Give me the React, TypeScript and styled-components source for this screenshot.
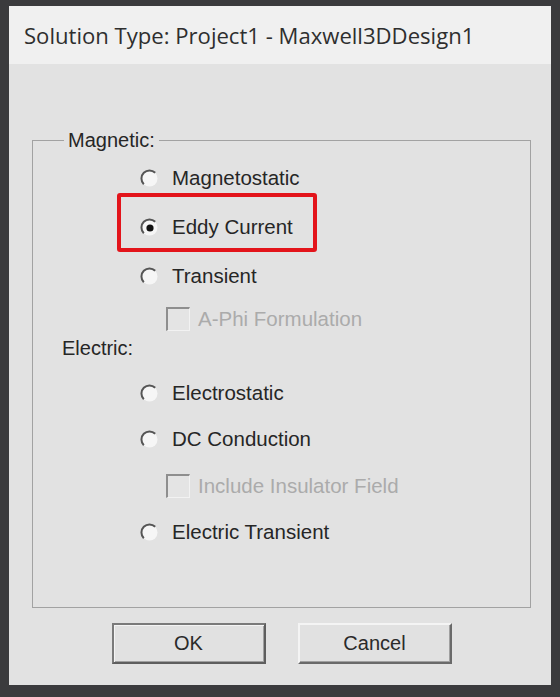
import React from 'react';
import styled, { createGlobalStyle } from 'styled-components';

const GlobalStyle = createGlobalStyle`
  html, body { margin: 0; padding: 0; background: #3b3b3d; }
  #root { width: 560px; height: 697px; }
`

const Backdrop = styled.div`
  width: 560px; height: 697px;
  box-sizing: border-box;
  padding: 6px 9px 12px 9px;
  background: #3b3b3d;
  display: flex;
`

const Dialog = styled.div`
  flex: 1;
  display: flex; flex-direction: column;
  background: #e2e2e2;
  font-family: "Liberation Sans", Arial, sans-serif;
  color: #262626;
`

const TitleBar = styled.div`
  height: 58px;
  flex-shrink: 0;
  display: flex; align-items: center;
  padding-left: 15px;
  background: #f0f0f0;
  font-family: "Open Sans", "Noto Sans", sans-serif;
  font-size: 22.1px;
  color: #2e2e2e;
`

const Body = styled.div`
  flex: 1;
  display: flex; flex-direction: column;
  padding: 65px 20px 22px 23px;
`

const Group = styled.fieldset`
  margin: 0;
  padding: 15px 0 63px 0;
  border: 1px solid #a2a2a2;
  display: flex; flex-direction: column;
  min-width: 0;
`

const Legend = styled.legend`
  margin-left: 31px;
  padding: 0 4px;
  font-size: 20px;
  line-height: 22px;
  color: #262626;
`

const SectionLabel = styled.div<{ $mt?: number }>`
  margin-top: ${p => p.$mt || 0}px;
  padding-left: 29px;
  height: 24px;
  display: flex; align-items: center;
  font-size: 20px;
`

const Row = styled.div<{ $mt?: number, $indent: number, $disabled?: boolean }>`
  position: relative;
  margin-top: ${p => p.$mt || 0}px;
  padding-left: ${p => p.$indent}px;
  height: 24px;
  display: flex; align-items: center;
  font-size: 20.5px;
  color: ${p => p.$disabled ? '#ababab' : '#262626'};
`

const Highlight = styled.div`
  position: absolute;
  left: 84px; top: -22px;
  width: 200px; height: 59px;
  box-sizing: border-box;
  border: 4px solid #e3141b;
  border-radius: 3px;
`

const RadioMark = styled.svg`
  width: 19px; height: 19px;
  margin-right: 13px;
  flex-shrink: 0;
`

const CheckMark = styled.span`
  width: 24px; height: 24px;
  box-sizing: border-box;
  margin-right: 8px;
  flex-shrink: 0;
  background: #e4e4e4;
  border-top: 2px solid #8e8e8e;
  border-left: 2px solid #8e8e8e;
  border-right: 1px solid #f2f2f2;
  border-bottom: 1px solid #f2f2f2;
`

const ButtonRow = styled.div`
  margin-top: 15px;
  display: flex; justify-content: center;
  gap: 32px;
`

const Button = styled.button<{ $default?: boolean }>`
  width: 154px; height: 41px;
  margin: 0;
  background: #e1e1e1;
  font-family: "Liberation Sans", Arial, sans-serif;
  font-size: 20px;
  color: #2a2a2a;
  border: 2px solid;
  border-color: ${p => p.$default
    ? '#7a7a7a #5e5e5e #5e5e5e #7a7a7a'
    : '#f4f4f4 #6a6a6a #6a6a6a #f4f4f4'};
  box-shadow: ${p => p.$default
    ? 'inset 1px 1px 0 #f4f4f4, inset -1px -1px 0 #a0a0a0'
    : 'inset -1px -1px 0 #a0a0a0'};
`

const Radio = ({checked}: {checked?: boolean}) =>
  <RadioMark viewBox='0 0 19 19'>
    <circle cx='9.5' cy='9.5' r='8' fill='#f6f6f6' />
    <path d='M3.8 15.2 A8 8 0 0 1 15.2 3.8' fill='none' stroke='#555' strokeWidth='2' />
    {checked && <circle cx='10' cy='10' r='3.6' fill='#111' />}
  </RadioMark>

const RadioOption = ({label, checked, mt, highlight}: {
  label: string, checked?: boolean, mt?: number, highlight?: boolean
}) =>
  <Row $indent={107} $mt={mt}>
    {highlight && <Highlight />}
    <Radio checked={checked} />
    {label}
  </Row>

const CheckOption = ({label, mt}: {label: string, mt?: number}) =>
  <Row $indent={133} $mt={mt} $disabled>
    <CheckMark />
    {label}
  </Row>

export default function App() {
  return <>
    <GlobalStyle />
    <Backdrop>
      <Dialog>
        <TitleBar>Solution Type: Project1 - Maxwell3DDesign1</TitleBar>
        <Body>
          <Group>
            <Legend>Magnetic:</Legend>
            <RadioOption label='Magnetostatic' />
            <RadioOption label='Eddy Current' checked highlight mt={25} />
            <RadioOption label='Transient' mt={25} />
            <CheckOption label='A-Phi Formulation' mt={19} />
            <SectionLabel $mt={5}>Electric:</SectionLabel>
            <RadioOption label='Electrostatic' mt={21} />
            <RadioOption label='DC Conduction' mt={22} />
            <CheckOption label='Include Insulator Field' mt={23} />
            <RadioOption label='Electric Transient' mt={22} />
          </Group>
          <ButtonRow>
            <Button $default>OK</Button>
            <Button>Cancel</Button>
          </ButtonRow>
        </Body>
      </Dialog>
    </Backdrop>
  </>
}
